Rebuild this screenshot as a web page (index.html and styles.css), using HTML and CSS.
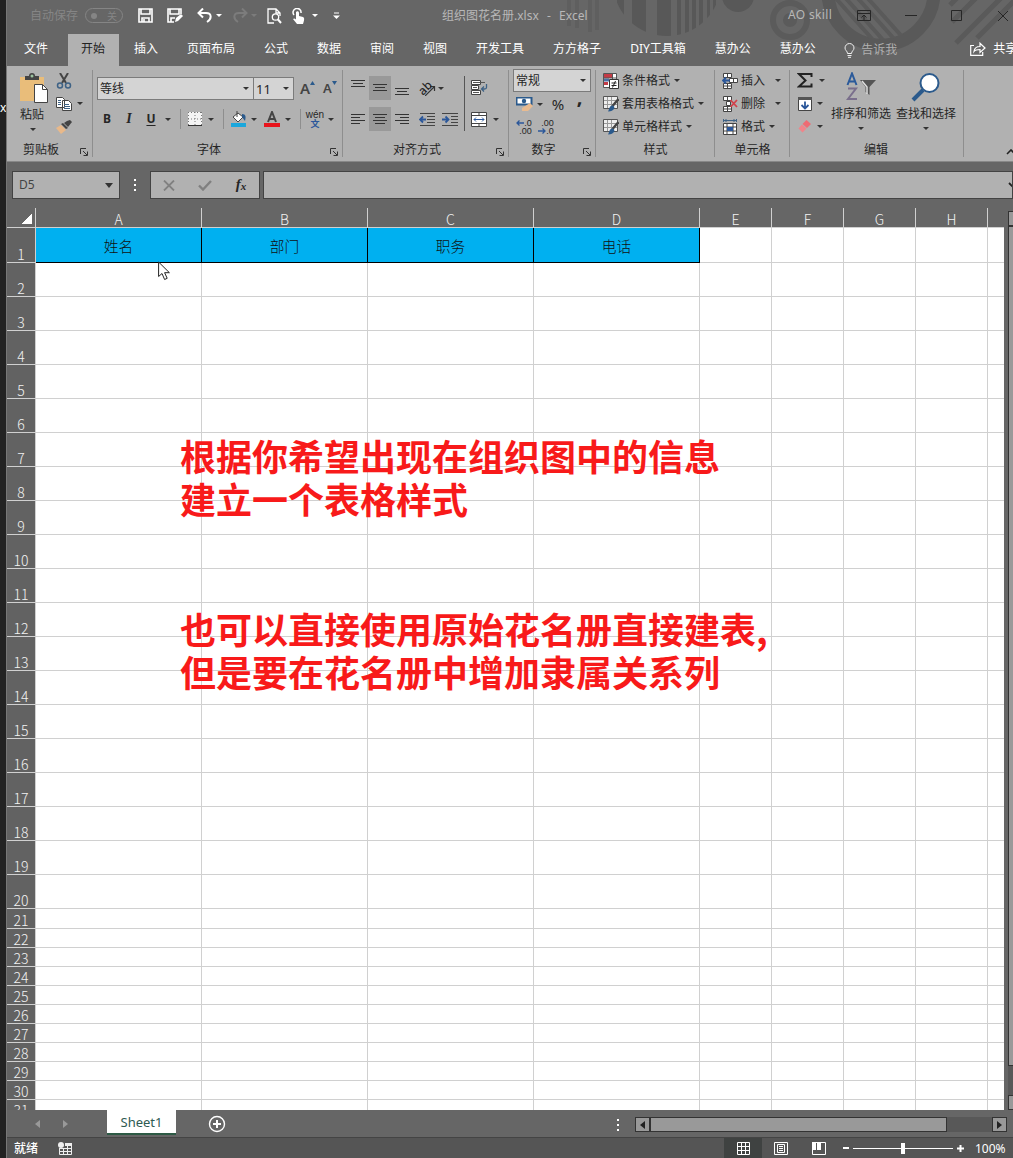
FILE: index.html
```
<!DOCTYPE html>
<html lang="zh-CN">
<head>
    <meta charset="UTF-8">
    <meta name="viewport" content="width=device-width, initial-scale=1.0">
    <title>组织图花名册.xlsx - Excel</title>
    <link rel="stylesheet" href="styles.css">
</head>
<body>
    <svg class="defs" width="0" height="0">
        <symbol id="launcher" viewBox="0 0 8 8"><path d="M.5 6V.5H6M3 3l4 4M7.5 3.5v4h-4" fill="none" stroke="#333"/></symbol>
        <symbol id="table-brush" viewBox="0 0 16 16">
            <path d="M.5.5h14v12H.5z" fill="#eee" stroke="#555"/>
            <path d="M1 4.500h13M1 8.500h13M4.500 1v11M8.500 1v11" stroke="#999"/>
            <path d="M15.500 3l-6 7" stroke="#444" stroke-width="2.500"/>
            <path d="M5 15.500c1-1 1-6 4.500-6 3.500 1 2 6-4.500 6z" fill="#2b5a8c"/>
        </symbol>
    </svg>
    <div class="desktop-edge">x</div>
    <div class="window">
        <header class="top">
            <svg class="pattern" width="1006" height="66" viewBox="7 0 1006 66">
                <clipPath id="disc"><circle cx="667" cy="-18" r="54"/></clipPath>
                <clipPath id="lens"><circle cx="881" cy="-8" r="48"/></clipPath>
                <path d="M569 0v26M577 0v28M590 0v32M597 0v30" stroke="#5f5f5f" stroke-width="4"/>
                <path d="M617 0h7v40h-7zM632 0h14v40h-14zM657 0h14v40h-14zM677 0h4v40h-4zM685 0h4v40h-4zM692 0h4v40h-4zM699 0h4v40h-4zM707 0h3v40h-3zM713 0h3v40h-3z" fill="#585858" clip-path="url(#disc)"/>
                <circle cx="738" cy="-4" r="16" fill="#585858"/>
                <circle cx="790" cy="20" r="17" fill="none" stroke="#5b5b5b" stroke-width="6"/>
                <circle cx="790" cy="20" r="7" fill="#5b5b5b"/>
                <circle cx="881" cy="-8" r="53" fill="none" stroke="#595959" stroke-width="13"/>
                <path d="M832-6l50 56M842-6l50 56M854-6l50 56M864-6l50 56" stroke="#5a5a5a" stroke-width="4" clip-path="url(#lens)"/>
                <path d="M950 5l9-9M952 22l28-28M956 43l48-48M977 38l40-40" stroke="#5a5a5a" stroke-width="5"/>
            </svg>
            <div class="titlebar">
                <span class="autosave">自动保存</span>
                <span class="toggle"><i></i>关</span>
                <svg width="15" height="15" viewBox="0 0 15 15"><path d="M1 1h13v13H1zM3 1v5h9V1M4 14v-4h7v4M6 11v3" fill="none" stroke="#fff" stroke-width="1.600"/></svg>
                <svg width="17" height="15" viewBox="0 0 17 15"><path d="M7 14H1V1h13v5M3 1v5h9V1M4 14v-4h4" fill="none" stroke="#fff" stroke-width="1.600"/><path d="M8 14l1-4 5-4 2 2-5 5z" fill="#fff"/></svg>
                <svg width="16" height="15" viewBox="0 0 16 15"><path d="M1 5h8c6 0 6 6 1 9M6 .5L1.500 5 6 9.500" fill="none" stroke="#fff" stroke-width="2"/></svg>
                <b class="caret light"></b>
                <svg width="16" height="15" viewBox="0 0 16 15"><path d="M15 5H7c-6 0-6 6-1 9M10 .5L14.500 5 10 9.500" fill="none" stroke="#7c7c7c" stroke-width="2"/></svg>
                <b class="caret dim"></b>
                <svg width="16" height="16" viewBox="0 0 16 16"><path d="M7 15H1V1h8l4 4v3M9 1v4h4" fill="none" stroke="#fff" stroke-width="1.300"/><circle cx="8.500" cy="9" r="3.200" fill="none" stroke="#fff" stroke-width="1.300"/><path d="M11 11.500l3 3.500" stroke="#fff" stroke-width="2"/></svg>
                <svg width="14" height="16" viewBox="0 0 14 16"><path d="M2 7a4 4 0 1 1 7-2" fill="none" stroke="#fff" stroke-width="1.500"/><path d="M4 4c1-1.500 3-1 3 1v3l4 1c2 1 1 4 0 7H5L1 11c1-1 2-.500 3 .500z" fill="#fff"/></svg>
                <b class="caret light"></b>
                <svg width="7" height="8" viewBox="0 0 7 8"><path d="M1 1h5" stroke="#fff"/><path d="M0 3.500h7L3.500 7z" fill="#fff"/></svg>
                <span class="doc-title">组织图花名册.xlsx&nbsp; -&nbsp; Excel</span>
                <span class="user">AO skill</span>
                <svg width="14" height="12" viewBox="0 0 14 12"><path d="M.5.5h13v10H.5zM1 3.500h12M7 10V5.500M4.500 7.500L7 5l2.500 2.500" fill="none" stroke="#262626"/></svg>
                <svg width="12" height="12" viewBox="0 0 12 12"><path d="M0 5.500h12" stroke="#262626"/></svg>
                <svg width="11" height="11" viewBox="0 0 11 11"><path d="M.5.5h10v10H.5z" fill="none" stroke="#262626"/></svg>
                <svg width="12" height="12" viewBox="0 0 12 12"><path d="M1 1l10 10M11 1L1 11" stroke="#262626"/></svg>
            </div>
            <nav class="tabs">
                <span class="tab file">文件</span>
                <span class="tab active">开始</span>
                <span class="tab">插入</span>
                <span class="tab">页面布局</span>
                <span class="tab">公式</span>
                <span class="tab">数据</span>
                <span class="tab">审阅</span>
                <span class="tab">视图</span>
                <span class="tab">开发工具</span>
                <span class="tab">方方格子</span>
                <span class="tab">DIY工具箱</span>
                <span class="tab">慧办公</span>
                <span class="tab">慧办公</span>
                <span class="tell-me">
                    <svg width="11" height="15" viewBox="0 0 11 15"><path d="M3.500 10.500C3.500 8 1 7.500 1 5a4.500 4.500 0 0 1 9 0c0 2.500-2.500 3-2.500 5.500zM3.500 12.500h4M4 14.300h3" fill="none" stroke="#eee"/></svg>
                    告诉我
                </span>
                <span class="share">
                    <svg width="16" height="14" viewBox="0 0 16 14"><path d="M4 3.500H.7v9.800h12V10M4 9.500c.5-4 3-5 6-5V1.200L15 6l-5 4.500V7.500c-3 0-4.500 0-6 2z" fill="none" stroke="#fff" stroke-width="1.200"/></svg>
                    共享
                </span>
            </nav>
        </header>

        <section class="ribbon">
            <div class="group clipboard">
                <div class="group-body">
                    <div class="paste">
                        <svg width="28" height="31" viewBox="0 0 28 31"><path d="M0 4h24v24H0z" fill="#e9bd7a"/><path d="M5 3h4a3 3 0 0 1 6 0h4v4H5z" fill="#444"/><circle cx="12" cy="3" r="1.500" fill="#9cc3a0"/><path d="M14.500 11.500h8l5 5v13h-13z" fill="#fff" stroke="#444"/><path d="M22.500 11.500v5h5" fill="none" stroke="#444"/></svg>
                        <span>粘贴</span>
                        <b class="caret"></b>
                    </div>
                    <div class="clip-tools">
                        <svg width="16" height="16" viewBox="0 0 16 16"><path d="M4 0l6 10M12 0L6 10" stroke="#444" stroke-width="2"/><circle cx="4" cy="12.500" r="2.500" fill="none" stroke="#3e6285" stroke-width="1.500"/><circle cx="12" cy="12.500" r="2.500" fill="none" stroke="#3e6285" stroke-width="1.500"/></svg><i></i>
                        <svg width="16" height="14" viewBox="0 0 16 14"><path d="M.5.5h6l2 2v8h-8zM6.500 3.500h6l3 3v7h-9z" fill="#fff" stroke="#444"/><path d="M2 3.500h3M2 5.500h3M2 7.500h3M8 7.500h5M8 9.500h6M8 11.500h6" stroke="#3e6285"/></svg><b class="caret"></b>
                        <svg width="16" height="15" viewBox="0 0 16 15"><path d="M8 4l4 4 4-5-2-2-3 1z" fill="#444"/><path d="M7 4l5 5-2 1-5-5z" fill="#444"/><path d="M5 6l5 5-5 4-5-6z" fill="#e9b98a"/></svg><i></i>
                    </div>
                </div>
                <div class="group-name">剪贴板</div>
                <svg class="launcher" width="8" height="8"><use href="#launcher"/></svg>
            </div>

            <div class="group font">
                <div class="group-body">
                    <div class="font-pick">
                        <span class="select">等线<b class="caret"></b></span>
                        <span class="select size">11<b class="caret"></b></span>
                        <span class="grow">A<svg width="5" height="4"><path d="M0 4l2.500-4L5 4z" fill="#2b5a8c"/></svg></span>
                        <span class="grow small">A<svg width="5" height="4"><path d="M0 0h5L2.500 4z" fill="#2b5a8c"/></svg></span>
                    </div>
                    <div class="font-style">
                        <span class="bold">B</span><span class="italic">I</span><span class="underline">U</span><b class="caret"></b><hr>
                        <svg width="14" height="14" viewBox="0 0 14 14"><path d="M0 0h14v14H0z" fill="#f4f4f4"/><path d="M.5 0v14M13.500 0v14M7 0v14M0 .5h14M0 7h14" stroke="#777" stroke-dasharray="1 2"/><path d="M0 13.500h14" stroke="#333"/></svg><b class="caret"></b><hr>
                        <svg width="17" height="16" viewBox="0 0 17 16"><path d="M3 6l5-4 5 4-5 5z" fill="#fff" stroke="#444"/><path d="M7 0v6" stroke="#444"/><path d="M12 3c4 0 4 3 3 7l-3-4z" fill="#2b5a8c"/><path d="M1 12h15v4H1z" fill="#1ba7dc"/></svg><b class="caret"></b>
                        <svg width="16" height="16" viewBox="0 0 16 16"><path d="M4 11L8 1l4 10M5.500 8h5" fill="none" stroke="#444" stroke-width="2"/><path d="M0 12h16v4H0z" fill="#e8141c"/></svg><b class="caret"></b><hr>
                        <span class="pinyin">wén<em>文</em></span><b class="caret"></b>
                    </div>
                </div>
                <div class="group-name">字体</div>
                <svg class="launcher" width="8" height="8"><use href="#launcher"/></svg>
            </div>

            <div class="group align">
                <div class="group-body">
                    <div class="align-grid">
                        <svg width="14" height="16" viewBox="0 0 14 16"><path d="M0 .5h14M2 3.500h10M0 6.500h14" stroke="#333"/></svg>
                        <span class="pressed"><svg width="14" height="8" viewBox="0 0 14 8"><path d="M0 .5h14M2 3.500h10M0 6.500h14" stroke="#333"/></svg></span>
                        <svg width="14" height="16" viewBox="0 0 14 16"><path d="M0 8.500h14M2 11.500h10M0 14.500h14" stroke="#333"/></svg>
                        <span class="orient"><em>ab</em><svg width="11" height="11" viewBox="0 0 11 11"><path d="M0 11L9 2M5 1.500h4.500v4.500" fill="none" stroke="#333" stroke-width="1.200"/></svg><b class="caret"></b></span>
                        <svg width="14" height="11" viewBox="0 0 14 11"><path d="M0 .5h14M0 3.500h9M0 6.500h14M0 9.500h9" stroke="#333"/></svg>
                        <span class="pressed"><svg width="14" height="11" viewBox="0 0 14 11"><path d="M0 .5h14M2 3.500h10M0 6.500h14M2 9.500h10" stroke="#333"/></svg></span>
                        <svg width="14" height="11" viewBox="0 0 14 11"><path d="M0 .5h14M5 3.500h9M0 6.500h14M5 9.500h9" stroke="#333"/></svg>
                        <svg width="16" height="13" viewBox="0 0 16 13"><path d="M1 .5h15M8 3.500h8M8 6.500h8M8 9.500h8M1 12.500h15" stroke="#444"/><path d="M7 6.500H1M4 3.500l-3 3 3 3" fill="none" stroke="#2b579a" stroke-width="1.800"/></svg>
                        <svg width="16" height="13" viewBox="0 0 16 13"><path d="M0 .5h16M9 3.500h7M9 6.500h7M9 9.500h7M0 12.500h16" stroke="#444"/><path d="M0 6.500h6M3.500 3.500l3 3-3 3" fill="none" stroke="#2b579a" stroke-width="1.800"/></svg>
                    </div>
                    <div class="wrap-tools">
                        <svg width="17" height="16" viewBox="0 0 17 16"><path d="M.5.5h9v4h-9zM.5 5.500h7v4h-7zM.5 10.500h9v4h-9z" fill="#fff" stroke="#444"/><path d="M2 2.500h12M2 7.500h4M2 12.500h6" stroke="#555"/><path d="M15.500 4v3.500c0 1-1 1.500-2 1.500h-3M13 6.500L10.500 9l2.500 2.500" fill="none" stroke="#3e6285" stroke-width="1.300"/></svg><i></i>
                        <svg width="16" height="15" viewBox="0 0 16 15"><path d="M.5.5h15v14H.5z" fill="#fff" stroke="#444"/><path d="M0 3.500h16M0 11.500h16M8 0v4M8 11v4" stroke="#444"/><path d="M3 7.500h10M5 5.500l-2 2 2 2M11 5.500l2 2-2 2" fill="none" stroke="#2b579a"/></svg><b class="caret"></b>
                    </div>
                </div>
                <div class="group-name">对齐方式</div>
                <svg class="launcher" width="8" height="8"><use href="#launcher"/></svg>
            </div>

            <div class="group number">
                <div class="group-body">
                    <span class="select">常规<b class="caret"></b></span>
                    <div class="number-row">
                        <svg width="17" height="15" viewBox="0 0 17 15"><path d="M.5.5h15v7H.5z" fill="#fff" stroke="#2b5a8c" stroke-width="2"/><circle cx="8" cy="4" r="2.200" fill="#2b5a8c"/><path d="M6 11l8-5 3 3-5 5H6z" fill="#e9bb90"/></svg><b class="caret"></b><span class="percent">%</span><span class="comma">,</span>
                    </div>
                    <div class="number-row decimals">
                        <span class="dec"><u><svg width="8" height="6" viewBox="0 0 8 6"><path d="M8 3H1M3.500 .5L1 3l2.500 2.500" fill="none" stroke="#2b579a" stroke-width="1.300"/></svg>.0</u><u>.00</u></span>
                        <span class="dec"><u>.00</u><u><svg width="8" height="6" viewBox="0 0 8 6"><path d="M0 3h7M4.500 .5L7 3 4.500 5.500" fill="none" stroke="#2b579a" stroke-width="1.300"/></svg>.0</u></span>
                    </div>
                </div>
                <div class="group-name">数字</div>
                <svg class="launcher" width="8" height="8"><use href="#launcher"/></svg>
            </div>

            <div class="group styles">
                <div class="group-body list">
                    <div class="item"><svg width="16" height="16" viewBox="0 0 16 16"><path d="M.5.5h13v14H.5z" fill="#fff" stroke="#555"/><path d="M1 1h8v4H1zM1 9h4v3H1z" fill="#c43b46"/><path d="M1 5.500h5v3H1z" fill="#4a6fa5"/><path d="M9.500 1v5M.5 5h13" stroke="#555"/><path d="M6.500 6.500h9v9h-9z" fill="#fff" stroke="#333"/><path d="M8.500 10h5M8.500 12.500h5M12.500 8l-3 6.500" stroke="#222"/></svg><span>条件格式</span><b class="caret"></b></div>
                    <div class="item"><svg width="16" height="16"><use href="#table-brush"/></svg><span>套用表格格式</span><b class="caret"></b></div>
                    <div class="item"><svg width="16" height="16"><use href="#table-brush"/></svg><span>单元格样式</span><b class="caret"></b></div>
                </div>
                <div class="group-name">样式</div>
            </div>

            <div class="group cells">
                <div class="group-body list">
                    <div class="item"><svg width="16" height="16" viewBox="0 0 16 16"><path d="M1.500.5h8v4h-8zM1.500 10.500h8v5h-8zM7.500 5.500h8v4h-8z" fill="#fff" stroke="#444"/><path d="M5.500 0v4M5.500 11v5M1 13h9M11.500 6v3" stroke="#444"/><path d="M8 7.500H1M4 4.500l-3 3 3 3" fill="none" stroke="#2b579a" stroke-width="1.800"/></svg><span>插入</span><b class="caret wide"></b></div>
                    <div class="item"><svg width="16" height="16" viewBox="0 0 16 16"><path d="M1.500.5h8v4h-8zM1.500 10.500h8v5h-8zM4.500 5.500h4v4h-4z" fill="#fff" stroke="#444"/><path d="M5.500 0v4M5.500 11v5M1 13h9" stroke="#444"/><path d="M8.500 4l6.500 7M15 4l-6.500 7" stroke="#d2404a" stroke-width="1.800"/></svg><span>删除</span><b class="caret wide"></b></div>
                    <div class="item"><svg width="16" height="16" viewBox="0 0 16 16"><path d="M1.500 4.500h13v11h-13z" fill="#fff" stroke="#444"/><path d="M1 8h14M1 12h14M5 4v12M11 4v12" stroke="#444"/><path d="M5 8h6v4H5z" fill="#2b579a"/><path d="M1 1.500h14M1.500 0v3M14.500 0v3M4.500 0L3 1.500 4.500 3M11.500 0L13 1.500 11.500 3" fill="none" stroke="#3e6285"/></svg><span>格式</span><b class="caret"></b></div>
                </div>
                <div class="group-name">单元格</div>
            </div>

            <div class="group edit">
                <div class="group-body">
                    <div class="edit-tools">
                        <svg width="16" height="15" viewBox="0 0 16 15"><path d="M14.500 4V1H2l6.500 6.500L2 13.500h12.500V10.500" fill="none" stroke="#222" stroke-width="2"/></svg><b class="caret sum"></b>
                        <svg width="14" height="14" viewBox="0 0 14 14"><path d="M.5.5h13v13H.5z" fill="#fff" stroke="#444"/><path d="M0 0h14v3H0z" fill="#555"/><path d="M7 4.500v7M3.500 8L7 11.500 10.500 8" fill="none" stroke="#2b579a" stroke-width="1.800"/></svg><b class="caret"></b>
                        <svg width="14" height="13" viewBox="0 0 14 13"><path d="M8.500 0l4.500 4-4 4-4.500-4z" fill="#ee6b73"/><path d="M4 4.500L8.500 8.500l-4 4L.5 8.500z" fill="#f0848a"/></svg><b class="caret"></b>
                    </div>
                    <div class="big">
                        <svg width="30" height="30" viewBox="0 0 30 30"><path d="M1.500 13L6 1.500 10.500 13M3 9.500h6" fill="none" stroke="#2b5a9a" stroke-width="2"/><path d="M2 16.500h8L2 27h9" fill="none" stroke="#7a6f8c" stroke-width="2"/><path d="M14 8h16l-6.500 7v8l-4-3v-5z" fill="#555"/><path d="M16 9l5 6v7" fill="none" stroke="#ddd" stroke-width="1.500"/></svg>
                        <span>排序和筛选</span><b class="caret"></b>
                    </div>
                    <div class="big">
                        <svg width="30" height="30" viewBox="0 0 30 30"><path d="M2 28l10-10" stroke="#2b5a8c" stroke-width="4"/><circle cx="18.500" cy="11" r="9" fill="#fff" stroke="#2b5a8c" stroke-width="2"/></svg>
                        <span>查找和选择</span><b class="caret"></b>
                    </div>
                </div>
                <div class="group-name">编辑</div>
            </div>
            <div class="collapse"><svg width="10" height="6" viewBox="0 0 10 6"><path d="M1 5l4-4 4 4" fill="none" stroke="#222" stroke-width="1.600"/></svg></div>
        </section>

        <section class="formula-bar">
            <div class="name-box">D5<b class="caret"></b></div>
            <div class="dots"></div>
            <div class="fx-box">
                <svg width="12" height="11" viewBox="0 0 12 11"><path d="M1 .5l10 10M11 .5l-10 10" stroke="#808080" stroke-width="1.800"/></svg>
                <svg width="14" height="11" viewBox="0 0 14 11"><path d="M1 5.500l4 4L13 1" fill="none" stroke="#808080" stroke-width="2.400"/></svg>
                <span class="fx">f<sub>x</sub></span>
            </div>
            <div class="formula-input"><svg width="9" height="7" viewBox="0 0 9 7"><path d="M1 1l4 4 4-4" fill="none" stroke="#222" stroke-width="1.800"/></svg></div>
        </section>

        <main class="workspace">
            <div class="sheet" id="sheet">
                <div class="row col-heads">
                    <div class="corner"></div>
                    <div>A</div><div>B</div><div>C</div><div>D</div>
                    <div>E</div><div>F</div><div>G</div><div>H</div><div></div>
                </div>
                <div class="row header-row">
                    <div class="row-head">1</div>
                    <div class="filled">姓名</div><div class="filled">部门</div><div class="filled">职务</div><div class="filled">电话</div>
                    <div></div><div></div><div></div><div></div><div></div>
                </div>
            </div>
            <div class="v-scroll"><div class="v-btn"></div><div class="v-thumb"></div><div class="v-btn"></div></div>
            <div class="note">根据你希望出现在组织图中的信息<br>建立一个表格样式<br><br><br>也可以直接使用原始花名册直接建表,<br>但是要在花名册中增加隶属关系列</div>
            <svg class="pointer" width="13" height="20" viewBox="0 0 13 20"><path d="M.6 1v14.500l3.400-3 2.600 6 2.600-1.200-2.600-5.600h4.800z" fill="#fff" stroke="#222"/></svg>
        </main>

        <footer>
            <div class="sheet-bar">
                <svg class="nav" width="5" height="8"><path d="M5 0v8L0 4z" fill="#999"/></svg>
                <svg class="nav" width="5" height="8"><path d="M0 0v8l5-4z" fill="#999"/></svg>
                <span class="sheet-tab">Sheet1</span>
                <svg class="add" width="18" height="18" viewBox="0 0 18 18"><circle cx="9" cy="9" r="7.500" fill="none" stroke="#fff" stroke-width="1.400"/><path d="M9 5v8M5 9h8" stroke="#fff" stroke-width="2"/></svg>
                <div class="dots"></div>
                <div class="h-scroll">
                    <div class="h-btn"><svg width="5" height="8"><path d="M5 0v8L0 4z" fill="#222"/></svg></div>
                    <div class="h-thumb"></div>
                    <div class="h-track"></div>
                    <div class="h-btn"><svg width="5" height="8"><path d="M0 0v8l5-4z" fill="#222"/></svg></div>
                </div>
            </div>
            <div class="status-bar">
                <span class="ready">就绪</span>
                <svg width="14" height="13" viewBox="0 0 14 13"><circle cx="3" cy="3" r="3" fill="#eee"/><path d="M7 1h7v3H7z" fill="#eee"/><path d="M1.500 7v5.500h12V4M1 6.500h12M1 9.500h12M5.500 6v6M9.500 4v8" fill="none" stroke="#eee"/></svg>
                <div class="views">
                    <span class="view on"><svg width="13" height="13" viewBox="0 0 13 13"><path d="M.5.5h12v12H.5zM4.500 0v13M8.500 0v13M0 4.500h13M0 8.500h13" fill="none" stroke="#fff"/></svg></span>
                    <span class="view"><svg width="14" height="13" viewBox="0 0 14 13"><path d="M.5.5h13v12H.5zM3.500 2.500h7v8h-7zM5 4.500h4M5 6.500h4M5 8.500h4" fill="none" stroke="#fff"/></svg></span>
                    <span class="view"><svg width="14" height="13" viewBox="0 0 14 13"><path d="M.5.5h13v12H.5z" fill="none" stroke="#fff"/><path d="M0 0h4v8H0zM5 0h4v8H5z" fill="#fff"/></svg></span>
                </div>
                <div class="zoom"><i class="minus"></i><div class="slider"><i></i></div><svg width="7" height="7"><path d="M0 3.500h7M3.500 0v7" stroke="#fff" stroke-width="2"/></svg></div>
                <span class="percent-label">100%</span>
            </div>
        </footer>
    </div>

    <script>
        // Empty rows below the header row
        const sheet = document.getElementById('sheet');
        for (let n = 2; n <= 31; n++) {
            const row = document.createElement('div');
            row.className = 'row' + (n <= 20 ? ' tall' : n === 21 ? ' mid' : '');
            row.innerHTML = `<div class="row-head">${n}</div>` + '<div></div>'.repeat(9);
            sheet.appendChild(row);
        }
    </script>
</body>
</html>
```
FILE: styles.css
```
:root {
    --chrome: #666666;
    --ribbon: #b1b1b1;
    --field: #d4d4d4;
    --ink: #262626;
    --line: #d0d0d0;
}

* {
    box-sizing: border-box;
    margin: 0;
    padding: 0;
}

body {
    display: flex;
    width: 1013px;
    height: 1158px;
    overflow: hidden;
    font-family: "Noto Sans", "Noto Sans CJK SC", sans-serif;
    font-size: 12px;
    line-height: 16px;
    color: var(--ink);
    background: #222;
}

svg {
    display: block;
    flex: none;
}

.defs {
    position: absolute;
}

.desktop-edge {
    width: 6px;
    height: 1158px;
    padding-top: 100px;
    overflow: hidden;
    color: #fff;
    background: #222;
}

.window {
    display: flex;
    flex-direction: column;
    width: 1007px;
    border-left: 1px solid #777;
    background: var(--chrome);
    overflow: hidden;
    white-space: nowrap;
}

.caret {
    display: block;
    width: 0;
    height: 0;
    border: 3px solid transparent;
    border-top-color: #333;
    border-bottom: 0;
}

.caret.light {
    border-top-color: #fff;
}

.caret.dim {
    border-top-color: #7c7c7c;
}

/* title bar and tabs */
.top {
    position: relative;
    height: 66px;
}

.pattern {
    position: absolute;
    left: 0;
    top: 0;
}

.titlebar {
    position: relative;
    display: grid;
    grid-template-columns: 78px 53px 29px 30px 19px 16px 19px 16px 25px 20px 21px 109px 346px 69px 48px 46px 46px 16px;
    align-items: center;
    height: 34px;
    padding-bottom: 3px;
}

.autosave {
    padding-left: 23px;
    color: #858585;
}

.toggle {
    display: flex;
    align-items: center;
    justify-content: space-between;
    width: 38px;
    height: 15px;
    padding: 0 5px;
    border: 1px solid #858585;
    border-radius: 8px;
    font-size: 10px;
    color: #858585;
}

.toggle i {
    width: 6px;
    height: 6px;
    border-radius: 50%;
    background: #858585;
}

.doc-title,
.user {
    color: #b8b8b8;
}

.doc-title {
    word-spacing: 1px;
}

.user {
    padding-bottom: 2px;
    letter-spacing: 0.35px;
}

.tabs {
    position: relative;
    display: flex;
    height: 32px;
    line-height: 30px;
    color: #fff;
}

.tab {
    flex: none;
    padding: 0 14.5px;
}

.tab.file {
    width: 61px;
    padding: 0 0 0 17px;
}

.tab.active {
    width: 51px;
    padding: 0 13px;
    margin-right: 0.5px;
    color: #222;
    background: var(--ribbon);
}

.tell-me,
.share {
    display: flex;
    flex: none;
    align-items: center;
    height: 32px;
    gap: 6px;
    color: #b0b0b0;
}

.tell-me {
    margin-left: 14px;
}

.share {
    margin-left: 73px;
    gap: 7px;
    height: 29px;
    color: #fff;
}

/* ribbon */
.ribbon {
    display: flex;
    height: 95px;
    background: var(--ribbon);
}

.group {
    display: flex;
    flex-direction: column;
    position: relative;
    flex: none;
}

.group::after {
    content: "";
    position: absolute;
    right: 0;
    top: 4px;
    width: 1px;
    height: 87px;
    background: #8e8e8e;
}

.group-body {
    height: 76px;
}

.group-name {
    text-align: center;
}

.launcher {
    position: absolute;
    right: 5px;
    bottom: 5px;
}

.clipboard { width: 86px; }
.font { width: 250px; }
.align { width: 166px; }
.number { width: 87px; }
.styles { width: 119px; }
.cells { width: 75px; }
.edit { width: 174px; }

.clipboard .group-name,
.font .group-name,
.align .group-name,
.number .group-name {
    padding-right: 18px;
}

.edit .group-name {
    padding-right: 2px;
}

.clipboard .group-body,
.align .group-body,
.edit .group-body {
    display: flex;
}

.paste {
    display: flex;
    flex-direction: column;
    align-items: center;
    width: 28px;
    margin-left: 13px;
    padding-top: 7px;
}

.paste span {
    margin: 3px 4px 5px 0;
}

.paste .caret {
    margin-right: 3px;
}

.clip-tools {
    display: grid;
    grid-template: repeat(3, 23px) / 18px 14px;
    align-items: center;
    justify-items: center;
    margin-left: 7px;
    padding-top: 3px;
}

.select {
    display: flex;
    align-items: center;
    justify-content: space-between;
    height: 23px;
    padding: 0 4px 0 2px;
    border: 1px solid #7b7b7b;
    background: var(--field);
}

.font-pick {
    display: grid;
    grid-template-columns: 157px 40px 21px 20px;
    padding: 11px 0 0 4px;
    height: 42px;
}

.select.size {
    border-left: 0;
    font-size: 13px;
}

.grow {
    display: flex;
    padding-left: 6px;
    font-size: 15px;
    font-weight: 600;
    line-height: 22px;
    color: #444;
}

.grow.small {
    padding-left: 8px;
    font-size: 13px;
}

.grow svg {
    margin-top: 4px;
}

.font-style {
    display: grid;
    grid-template-columns: 22px 22px 22px 12px 12px 18px 14px 10px 20px 12px 24px 8px 16px 14px 18px;
    align-items: center;
    justify-items: center;
    height: 22px;
    margin-left: 3px;
}

.font-style hr {
    width: 1px;
    height: 20px;
    border: 0;
    background: #8e8e8e;
}

.bold,
.italic,
.underline {
    font-weight: 700;
}

.italic {
    font-family: "Liberation Serif", serif;
    font-size: 14px;
    font-style: italic;
}

.underline {
    text-decoration: underline;
    text-underline-offset: 2px;
}

.pinyin {
    font-family: "Liberation Sans", sans-serif;
    font-size: 10px;
    line-height: 9px;
    text-align: center;
}

.pinyin em {
    display: block;
    font-family: "Noto Sans CJK SC", sans-serif;
    font-size: 9px;
    font-style: normal;
    font-weight: 700;
    line-height: 9px;
    color: #2b579a;
}

.align-grid {
    display: grid;
    grid-template: 24px 24px / 22px 22px 22px 28px 18px;
    row-gap: 7px;
    align-items: center;
    justify-items: center;
    height: 65px;
    margin-left: 4px;
    padding-top: 10px;
}

.pressed {
    display: flex;
    align-items: center;
    justify-content: center;
    width: 22px;
    height: 24px;
    background: #999;
}

.orient {
    display: flex;
    align-items: center;
    grid-column: span 2;
    justify-self: start;
    padding-left: 5px;
}

.orient em {
    font-size: 12px;
    font-style: normal;
    font-weight: 500;
    line-height: 12px;
    transform: rotate(-45deg);
}

.orient svg {
    margin: 5px 0 0 -7px;
}

.orient .caret {
    margin-left: 2px;
}

.wrap-tools {
    display: grid;
    grid-template: 24px 24px / 28px 6px;
    row-gap: 7px;
    align-items: center;
    justify-items: center;
    height: 55px;
    margin: 10px 0 0 5px;
    border-left: 1px solid #555;
}

.number .select {
    width: 78px;
    margin: 3px 0 0 4px;
}

.number-row {
    display: grid;
    grid-template-columns: 23px 8px 28px 15px;
    align-items: center;
    justify-items: center;
    height: 23px;
    margin-left: 4px;
}

.number-row.decimals {
    grid-template-columns: 22px 22px;
}

.percent {
    font-size: 15px;
}

.comma {
    font-size: 20px;
    font-weight: 700;
    line-height: 10px;
    padding-bottom: 14px;
}

.dec {
    display: flex;
    flex-direction: column;
    align-items: flex-end;
    font-family: "Liberation Sans", sans-serif;
    font-size: 9px;
    line-height: 8px;
}

.dec u {
    display: flex;
    align-items: center;
    text-decoration: none;
}

.list {
    padding-top: 3px;
}

.item {
    display: flex;
    align-items: center;
    height: 23px;
    padding-left: 7px;
}

.item span {
    margin: 1px 4px 0 3px;
}

.item .caret.wide {
    margin-left: 6px;
}

.edit-tools {
    display: grid;
    grid-template: repeat(3, 23px) / 16px 14px;
    align-items: center;
    justify-items: center;
    width: 35px;
    padding: 3px 0 0 7px;
}

.caret.sum {
    margin-left: 3px;
}

.big {
    display: flex;
    flex-direction: column;
    align-items: center;
    width: 60px;
    margin-left: 5px;
    padding-top: 6px;
}

.edit-tools + .big {
    margin-left: 6px;
}

.big span {
    margin: 4px 0 5px;
}

.collapse {
    flex: 1;
    overflow: hidden;
    padding: 83px 0 0 42px;
}

/* formula bar */
.formula-bar {
    display: flex;
    height: 47px;
    padding: 9px 0 9px 5px;
    border-top: 1px solid #888;
}

.formula-bar > div:not(.dots) {
    border: 1px solid #434343;
    background: var(--ribbon);
}

.name-box {
    display: flex;
    align-items: center;
    justify-content: space-between;
    width: 108px;
    padding: 0 6px;
    color: #444;
}

.name-box .caret {
    border-width: 5px 4px 0;
}

.dots {
    width: 2px;
    height: 12px;
    background: repeating-linear-gradient(#fff 0 2px, transparent 2px 5px);
}

.formula-bar .dots {
    margin: 8px 14px 0;
}

.fx-box {
    display: grid;
    grid-template-columns: repeat(3, 36px);
    align-items: center;
    justify-items: center;
    width: 110px;
}

.fx {
    font-family: "Liberation Serif", serif;
    font-size: 15px;
    font-style: italic;
    font-weight: 700;
}

.fx sub {
    font-size: 11px;
    vertical-align: -1px;
}

.formula-input {
    display: flex;
    flex: 1;
    justify-content: flex-end;
    margin-left: 3px;
    padding-top: 10px;
    overflow: hidden;
}

.formula-input svg {
    margin-right: -5px;
}

/* sheet */
.workspace {
    position: relative;
    display: flex;
    height: 902px;
    overflow: hidden;
    font-family: "Noto Sans CJK SC", sans-serif;
    font-size: 14px;
}

.sheet {
    width: 997px;
}

.row {
    display: grid;
    grid-template-columns: 29px repeat(4, 166px) repeat(4, 72px) 16px;
    grid-template-rows: 100%;
    height: 19px;
    background: #fff;
}

.row > div {
    border-right: 1px solid var(--line);
    border-bottom: 1px solid var(--line);
}

.row > div:last-child {
    border-right: 0;
}

.row.tall {
    height: 34px;
}

.row.mid {
    height: 20px;
}

.row.header-row {
    height: 35px;
}

.row.col-heads {
    height: 20px;
    background: var(--chrome);
    color: #f2f2f2;
    font-weight: 300;
    line-height: 22px;
    text-align: center;
}

.corner {
    display: flex;
    justify-content: flex-end;
    align-items: flex-end;
    padding: 0 3px 3px 0;
}

.corner::after {
    content: "";
    width: 11px;
    height: 11px;
    background: linear-gradient(135deg, transparent 50%, #fff 50%);
}

.row > .row-head {
    display: flex;
    align-items: flex-end;
    justify-content: center;
    background: #626262;
    color: #f2f2f2;
    font-weight: 300;
    line-height: 16px;
}

.row > .filled {
    border-color: #000;
    background: #00b0f0;
    color: #111;
    font-size: 14.67px;
    font-weight: 300;
    line-height: 35px;
    text-align: center;
}

.v-scroll {
    width: 5px;
    margin: 3px 0 0 4px;
    background: #585858;
}

.v-btn {
    height: 15px;
    border: 1px solid #333;
    border-right: 0;
    background: #999;
}

.v-thumb {
    height: 840px;
    margin-bottom: 29px;
    border: 1px solid #333;
    border-right: 0;
    background: #999;
}

.note {
    position: absolute;
    left: 173px;
    top: 226px;
    font-size: 36px;
    font-weight: 700;
    line-height: 43.25px;
    color: #f81a1a;
}

.pointer {
    position: absolute;
    left: 151px;
    top: 53px;
}

/* bottom bars */
.sheet-bar {
    display: flex;
    height: 28px;
    border-bottom: 1px solid #444;
}

.nav {
    margin: 10px 0 0 28px;
}

.nav + .nav {
    margin-left: 23px;
}

.sheet-tab {
    width: 69px;
    height: 25px;
    margin-left: 39px;
    border-bottom: 2px solid #2d5a45;
    background: #fff;
    color: #2d5a52;
    font-size: 13px;
    line-height: 24px;
    text-align: center;
}

.add {
    margin: 5px 0 0 32px;
}

.sheet-bar .dots {
    margin: 9px 16px 0 391px;
}

.h-scroll {
    display: flex;
    width: 372px;
    height: 15px;
    margin-top: 7px;
}

.h-btn {
    display: flex;
    align-items: center;
    justify-content: center;
    width: 15px;
    border: 1px solid #333;
    background: #999;
}

.h-thumb {
    width: 297px;
    border: 1px solid #333;
    background: #999;
}

.h-track {
    flex: 1;
    background: #585858;
}

.status-bar {
    display: flex;
    align-items: center;
    height: 20px;
    color: #fff;
    background: #555;
}

.ready {
    width: 51px;
    padding: 1px 0 0 7px;
    font-weight: 500;
}

.views {
    display: flex;
    margin-left: 652px;
}

.view {
    display: flex;
    align-items: center;
    justify-content: center;
    width: 38px;
    height: 20px;
}

.view.on {
    background: #3f4241;
}

.zoom {
    display: flex;
    align-items: center;
    margin-left: 5px;
}

.minus {
    width: 6px;
    height: 2px;
    background: #fff;
}

.slider {
    display: flex;
    align-items: center;
    justify-content: center;
    width: 100px;
    height: 12px;
    margin: 0 4px;
    background: linear-gradient(#fff, #fff) center / 100% 1px no-repeat;
}

.slider i {
    width: 4px;
    height: 11px;
    background: #fff;
}

.percent-label {
    margin-left: 11px;
    padding-top: 1px;
}
```
